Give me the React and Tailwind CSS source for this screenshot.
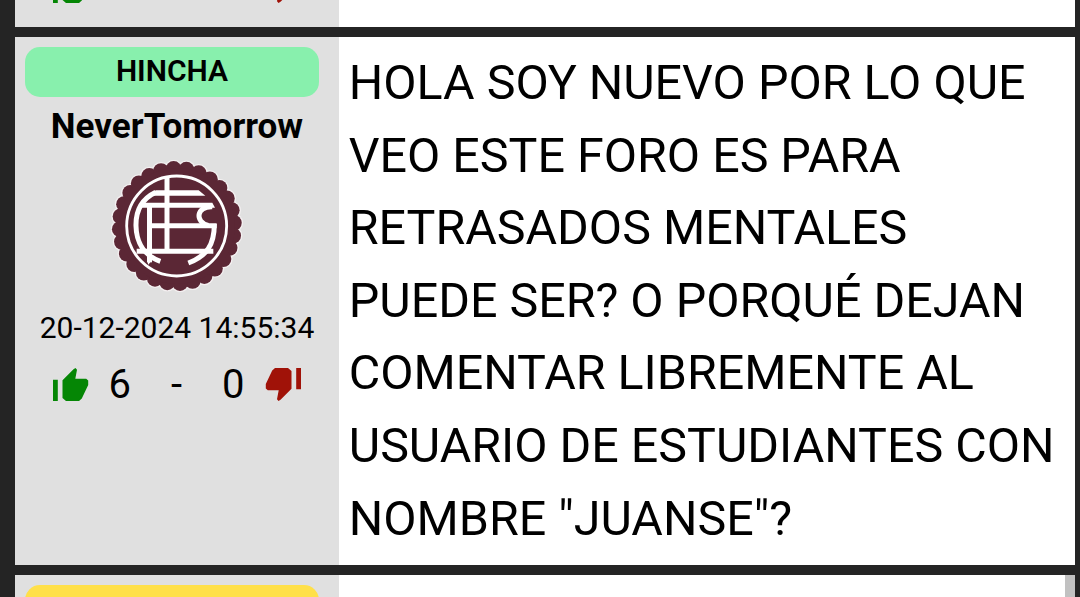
const dark = 'bg-[#242424]';

const LIKE =
  'M0 11.7H4.8V33H0Z M13 33L9.5 30V12.3L20.5 1.2L22.5 0L24 1.8L22.3 10.7H33.2L35.2 12.5V17L28.8 30.5L26 33Z';

function Thumb({ down }) {
  return (
    <svg
      className={down ? 'h-[33px] w-[36px] rotate-180' : 'h-[33px] w-[36px]'}
      viewBox="0 0 36 33"
    >
      <path d={LIKE} fill={down ? '#a01208' : '#058605'} />
    </svg>
  );
}

function Crest() {
  const bumps = Array.from({ length: 28 }, (_, i) => {
    const a = ((i * 360) / 28 - 3.2 - 90) * (Math.PI / 180);
    return [231.5 + 171 * Math.cos(a), 228 + 171 * Math.sin(a)];
  });
  return (
    <svg className="size-[132px]" viewBox="34 30 396 396">
      {bumps.map(([x, y], i) => (
        <circle key={i} cx={x} cy={y} r="28" fill="#f4f0f1" />
      ))}
      {bumps.map(([x, y], i) => (
        <circle key={i} cx={x} cy={y} r="24" fill="#5b2735" />
      ))}
      <circle cx="231.5" cy="228" r="174" fill="#5b2735" />
      <circle cx="231" cy="228" r="150" fill="none" stroke="#fff" strokeWidth="8.5" />
      <path d="M168 121H297L317 137H152Z M130 158H338L346 173H122Z" fill="#fff" />
      <g fill="none" stroke="#fff" strokeWidth="15">
        <path d="M202 82V300" />
        <path d="M149.500 165V337" />
        <path d="M149 227.500H351" />
        <path d="M111 303.500H341" />
        <path d="M168 127C125 148 108 185 109 228C110 275 132 316 182 334" />
        <path d="M338 170C290 168 284 216 326 226" />
        <path d="M344 222C344 284 322 318 266 339" />
      </g>
      <path d="M142 330H157L146 344Z" fill="#fff" />
    </svg>
  );
}

export default function App() {
  return (
    <main className={`${dark} flex h-[597px] flex-col gap-[10px] overflow-hidden pl-[15px] pr-[5px] font-['Roboto',sans-serif] text-black`}>
      <article className="flex h-[27px] shrink-0 bg-white">
        <aside className="flex w-[324px] items-end justify-between overflow-hidden bg-[#e0e0e0] pb-[24px] pl-[38px] pr-[38px]">
          <Thumb />
          <Thumb down />
        </aside>
      </article>
      <article className="flex h-[528px] shrink-0 bg-white">
        <aside className="flex w-[324px] shrink-0 flex-col items-center bg-[#e0e0e0] pt-[10px]">
          <div className="ml-[10px] flex h-[50px] w-[294px] items-center justify-center self-start rounded-[15px] bg-[#88f0ad] pb-[3px] text-[30px] font-semibold">
            HINCHA
          </div>
          <h2 className="mt-[9px] h-[54px] text-[35.1px] leading-[40px] font-bold whitespace-nowrap">NeverTomorrow</h2>
          <Crest />
          <time className="mt-[18px] text-[30px] leading-[36px] whitespace-nowrap">20-12-2024 14:55:34</time>
          <div className="mt-[22px] flex h-[33px] w-full items-center pl-[38px] text-[40px]">
            <Thumb />
            <span className="ml-[19.5px] w-[23px]">6</span>
            <span className="ml-[39.5px] w-[18px]">-</span>
            <span className="ml-[33px] w-[23px]">0</span>
            <span className="ml-[20px]"><Thumb down /></span>
          </div>
        </aside>
        <p className="py-[10px] pl-[9.75px] text-[48.4px] leading-[72.6px] whitespace-nowrap">
          HOLA SOY NUEVO POR LO QUE<br />
          VEO ESTE FORO ES PARA<br />
          RETRASADOS MENTALES<br />
          PUEDE SER? O PORQUÉ DEJAN<br />
          COMENTAR LIBREMENTE AL<br />
          USUARIO DE ESTUDIANTES CON<br />
          NOMBRE "JUANSE"?
        </p>
      </article>
      <article className="flex h-[22px] shrink-0 justify-between bg-white">
        <aside className="w-[324px] overflow-hidden bg-[#e0e0e0] pt-[10px] pl-[10px]">
          <div className="h-[50px] w-[294px] rounded-[15px] bg-[#ffe049]" />
        </aside>
        <div className="w-[10px] bg-[#c1c1c1]" />
      </article>
    </main>
  );
}
